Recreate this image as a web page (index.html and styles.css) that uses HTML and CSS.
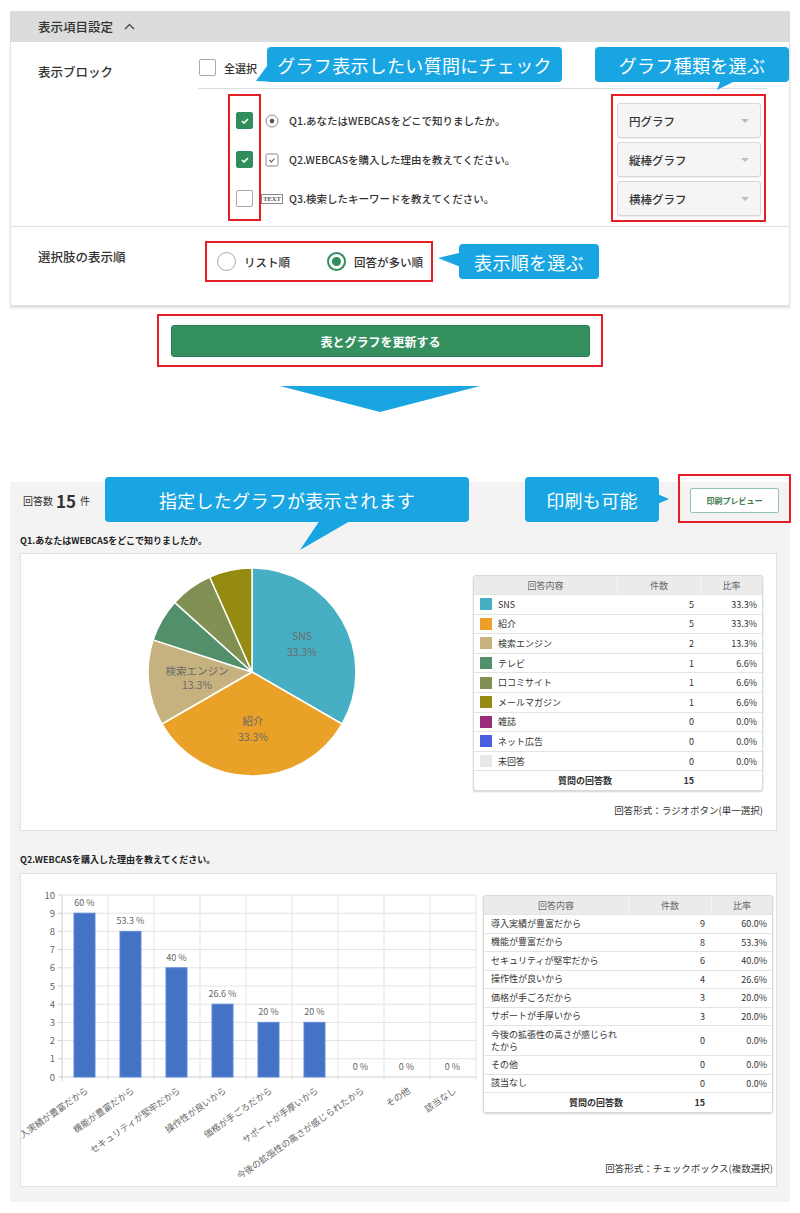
FILE: index.html
```html
<!DOCTYPE html>
<html lang="ja">
<head>
<meta charset="utf-8">
<title>表示項目設定</title>
<link rel="stylesheet" href="styles.css">
</head>
<body>
<div class="page">
  <section class="settings">
    <div class="settings-head">表示項目設定<svg class="chev" width="11" height="7" viewBox="0 0 11 7"><polyline points="1,6 5.5,1.5 10,6" fill="none" stroke="#555" stroke-width="1.5"/></svg></div>
    <div class="settings-body">
      <div class="block-row">
        <div class="row-label lbl-block">表示ブロック</div>
        <div class="row-content">
          <div class="all-row"><span class="cb"></span><span class="all-text">全選択</span></div>
          <div class="q-list">
            <div class="q-row">
              <span class="cb cb-on"><svg width="8" height="6" viewBox="0 0 8 6"><polyline points="1,3 3,5 7,1" fill="none" stroke="#fff" stroke-width="1.6"/></svg></span>
              <span class="qicon"><svg width="14" height="14" viewBox="0 0 14 14"><circle cx="7" cy="7" r="6" fill="none" stroke="#888" stroke-width="1"/><circle cx="7" cy="7" r="2.3" fill="#555"/></svg></span>
              <span class="qtext">Q1.あなたはWEBCASをどこで知りましたか。</span>
              <div class="sel"><span>円グラフ</span><i class="caret"></i></div>
            </div>
            <div class="q-row">
              <span class="cb cb-on"><svg width="8" height="6" viewBox="0 0 8 6"><polyline points="1,3 3,5 7,1" fill="none" stroke="#fff" stroke-width="1.6"/></svg></span>
              <span class="qicon"><svg width="14" height="14" viewBox="0 0 14 14"><rect x="1" y="1" width="12" height="12" rx="1.5" fill="none" stroke="#888" stroke-width="1"/><polyline points="4.5,7 6.5,9 9.5,5.5" fill="none" stroke="#555" stroke-width="1.1"/></svg></span>
              <span class="qtext">Q2.WEBCASを購入した理由を教えてください。</span>
              <div class="sel"><span>縦棒グラフ</span><i class="caret"></i></div>
            </div>
            <div class="q-row">
              <span class="cb"></span>
              <span class="qicon"><span class="text-ico">TEXT</span></span>
              <span class="qtext">Q3.検索したキーワードを教えてください。</span>
              <div class="sel"><span>横棒グラフ</span><i class="caret"></i></div>
            </div>
          </div>
        </div>
      </div>
      <div class="order-row">
        <div class="row-label lbl-order">選択肢の表示順</div>
        <div class="row-content order-content">
          <div class="radio-group">
            <label class="radio"><span class="rc"></span><span>リスト順</span></label>
            <label class="radio"><span class="rc on"></span><span>回答が多い順</span></label>
          </div>
          <div class="callout c-order">表示順を選ぶ</div>
        </div>
      </div>
    </div>
    <div class="callout c-check">グラフ表示したい質問にチェック</div>
    <div class="callout c-type">グラフ種類を選ぶ</div>
    <div class="mark m-checks"></div>
    <div class="mark m-selects"></div>
  </section>

  <div class="update-area">
    <div class="update-mark"><button class="update-btn">表とグラフを更新する</button></div>
  </div>
  <div class="down-arrow"></div>

  <section class="results">
    <div class="result-head">
      <span class="count-label">回答数</span><span class="count-num">15</span><span class="count-label">件</span>
      <div class="print-btn">印刷プレビュー</div>
    </div>
    <div class="callout c-graph">指定したグラフが表示されます</div>
    <div class="callout c-print">印刷も可能</div>
    <div class="mark m-print"></div>

    <div class="q-title q-title1">Q1.あなたはWEBCASをどこで知りましたか。</div>
    <div class="card card1">
      <svg class="pie" width="452" height="276" viewBox="0 0 452 276">
        <g stroke="#fff" stroke-width="1.5">
          <path d="M231,118 L231,14 A104,104 0 0 1 321.07,170 Z" fill="#47afc4"/>
          <path d="M231,118 L321.07,170 A104,104 0 0 1 140.93,170 Z" fill="#e9a127"/>
          <path d="M231,118 L140.93,170 A104,104 0 0 1 132.09,85.86 Z" fill="#c6b27f"/>
          <path d="M231,118 L132.09,85.86 A104,104 0 0 1 153.71,48.41 Z" fill="#52906c"/>
          <path d="M231,118 L153.71,48.41 A104,104 0 0 1 188.70,22.99 Z" fill="#819153"/>
          <path d="M231,118 L188.70,22.99 A104,104 0 0 1 231,14 Z" fill="#958b12"/>
        </g>
        <g class="pie-lbl" text-anchor="middle">
          <text x="281" y="86">SNS</text>
          <text x="281" y="102">33.3%</text>
          <text x="232" y="171">紹介</text>
          <text x="232" y="187">33.3%</text>
          <text x="176" y="121">検索エンジン</text>
          <text x="176" y="135">13.3%</text>
        </g>
      </svg>
      <div class="side side1">
        <div class="tbl t1">
          <div class="tr th"><div>回答内容</div><div>件数</div><div>比率</div></div>
          <div class="tr"><div class="c1"><i class="sw" style="background:#47afc4"></i>SNS</div><div class="c2">5</div><div class="c3">33.3%</div></div>
          <div class="tr"><div class="c1"><i class="sw" style="background:#e9a127"></i>紹介</div><div class="c2">5</div><div class="c3">33.3%</div></div>
          <div class="tr"><div class="c1"><i class="sw" style="background:#c6b27f"></i>検索エンジン</div><div class="c2">2</div><div class="c3">13.3%</div></div>
          <div class="tr"><div class="c1"><i class="sw" style="background:#52906c"></i>テレビ</div><div class="c2">1</div><div class="c3">6.6%</div></div>
          <div class="tr"><div class="c1"><i class="sw" style="background:#819153"></i>口コミサイト</div><div class="c2">1</div><div class="c3">6.6%</div></div>
          <div class="tr"><div class="c1"><i class="sw" style="background:#958b12"></i>メールマガジン</div><div class="c2">1</div><div class="c3">6.6%</div></div>
          <div class="tr"><div class="c1"><i class="sw" style="background:#9a2c79"></i>雑誌</div><div class="c2">0</div><div class="c3">0.0%</div></div>
          <div class="tr"><div class="c1"><i class="sw" style="background:#4a5de2"></i>ネット広告</div><div class="c2">0</div><div class="c3">0.0%</div></div>
          <div class="tr"><div class="c1"><i class="sw" style="background:#e8e8e8"></i>未回答</div><div class="c2">0</div><div class="c3">0.0%</div></div>
          <div class="tr total"><div class="c1">質問の回答数</div><div class="c2">15</div><div class="c3"></div></div>
        </div>
        <div class="form-note note1">回答形式：ラジオボタン(単一選択)</div>
      </div>
    </div>

    <div class="q-title q-title2">Q2.WEBCASを購入した理由を教えてください。</div>
    <div class="card card2">
      <svg class="bars" width="462" height="312" viewBox="0 0 462 312">
        <g stroke="#e3e3e3" stroke-width="1">
          <line x1="41" y1="184.8" x2="455" y2="184.8"/>
          <line x1="41" y1="166.6" x2="455" y2="166.6"/>
          <line x1="41" y1="148.4" x2="455" y2="148.4"/>
          <line x1="41" y1="130.2" x2="455" y2="130.2"/>
          <line x1="41" y1="112" x2="455" y2="112"/>
          <line x1="41" y1="93.8" x2="455" y2="93.8"/>
          <line x1="41" y1="75.6" x2="455" y2="75.6"/>
          <line x1="41" y1="57.4" x2="455" y2="57.4"/>
          <line x1="41" y1="39.2" x2="455" y2="39.2"/>
          <line x1="41" y1="21" x2="455" y2="21"/>
          <line x1="87" y1="21" x2="87" y2="207"/>
          <line x1="133" y1="21" x2="133" y2="207"/>
          <line x1="179" y1="21" x2="179" y2="207"/>
          <line x1="225" y1="21" x2="225" y2="207"/>
          <line x1="271" y1="21" x2="271" y2="207"/>
          <line x1="317" y1="21" x2="317" y2="207"/>
          <line x1="363" y1="21" x2="363" y2="207"/>
          <line x1="409" y1="21" x2="409" y2="207"/>
          <line x1="455" y1="21" x2="455" y2="207"/>
        </g>
        <g stroke="#cfcfcf" stroke-width="1">
          <line x1="41" y1="21" x2="41" y2="207"/>
          <line x1="37" y1="203" x2="455" y2="203"/>
          <line x1="37" y1="184.8" x2="41" y2="184.8"/>
          <line x1="37" y1="166.6" x2="41" y2="166.6"/>
          <line x1="37" y1="148.4" x2="41" y2="148.4"/>
          <line x1="37" y1="130.2" x2="41" y2="130.2"/>
          <line x1="37" y1="112" x2="41" y2="112"/>
          <line x1="37" y1="93.8" x2="41" y2="93.8"/>
          <line x1="37" y1="75.6" x2="41" y2="75.6"/>
          <line x1="37" y1="57.4" x2="41" y2="57.4"/>
          <line x1="37" y1="39.2" x2="41" y2="39.2"/>
          <line x1="37" y1="21" x2="41" y2="21"/>
        </g>
        <g class="axis-lbl" text-anchor="end">
          <text x="34" y="206.5">0</text>
          <text x="34" y="188.3">1</text>
          <text x="34" y="170.1">2</text>
          <text x="34" y="151.9">3</text>
          <text x="34" y="133.7">4</text>
          <text x="34" y="115.5">5</text>
          <text x="34" y="97.3">6</text>
          <text x="34" y="79.1">7</text>
          <text x="34" y="60.9">8</text>
          <text x="34" y="42.7">9</text>
          <text x="34" y="24.5">10</text>
        </g>
        <g fill="#4472c4" stroke="#5b8ad8" stroke-width="1">
          <rect x="53" y="39.2" width="21" height="163.8"/>
          <rect x="99" y="57.4" width="21" height="145.6"/>
          <rect x="145" y="93.8" width="21" height="109.2"/>
          <rect x="191" y="130.2" width="21" height="72.8"/>
          <rect x="237" y="148.4" width="21" height="54.6"/>
          <rect x="283" y="148.4" width="21" height="54.6"/>
        </g>
        <g class="val-lbl" text-anchor="middle">
          <text x="63.5" y="32">60 %</text>
          <text x="109.5" y="50.4">53.3 %</text>
          <text x="155.5" y="86.8">40 %</text>
          <text x="201.5" y="123.2">26.6 %</text>
          <text x="247.5" y="141.4">20 %</text>
          <text x="293.5" y="141.4">20 %</text>
          <text x="339.5" y="196">0 %</text>
          <text x="385.5" y="196">0 %</text>
          <text x="431.5" y="196">0 %</text>
        </g>
        <g class="x-lbl" text-anchor="end">
          <text x="68" y="218" transform="rotate(-35 68 218)">導入実績が豊富だから</text>
          <text x="114" y="218" transform="rotate(-35 114 218)">機能が豊富だから</text>
          <text x="160" y="218" transform="rotate(-35 160 218)">セキュリティが堅牢だから</text>
          <text x="206" y="218" transform="rotate(-35 206 218)">操作性が良いから</text>
          <text x="252" y="218" transform="rotate(-35 252 218)">価格が手ごろだから</text>
          <text x="298" y="218" transform="rotate(-35 298 218)">サポートが手厚いから</text>
          <text x="344" y="218" transform="rotate(-35 344 218)">今後の拡張性の高さが感じられたから</text>
          <text x="390" y="218" transform="rotate(-35 390 218)">その他</text>
          <text x="436" y="218" transform="rotate(-35 436 218)">該当なし</text>
        </g>
      </svg>
      <div class="side side2">
        <div class="tbl t2">
          <div class="tr th"><div>回答内容</div><div>件数</div><div>比率</div></div>
          <div class="tr"><div class="c1">導入実績が豊富だから</div><div class="c2">9</div><div class="c3">60.0%</div></div>
          <div class="tr"><div class="c1">機能が豊富だから</div><div class="c2">8</div><div class="c3">53.3%</div></div>
          <div class="tr"><div class="c1">セキュリティが堅牢だから</div><div class="c2">6</div><div class="c3">40.0%</div></div>
          <div class="tr"><div class="c1">操作性が良いから</div><div class="c2">4</div><div class="c3">26.6%</div></div>
          <div class="tr"><div class="c1">価格が手ごろだから</div><div class="c2">3</div><div class="c3">20.0%</div></div>
          <div class="tr"><div class="c1">サポートが手厚いから</div><div class="c2">3</div><div class="c3">20.0%</div></div>
          <div class="tr tall"><div class="c1">今後の拡張性の高さが感じられたから</div><div class="c2">0</div><div class="c3">0.0%</div></div>
          <div class="tr"><div class="c1">その他</div><div class="c2">0</div><div class="c3">0.0%</div></div>
          <div class="tr"><div class="c1">該当なし</div><div class="c2">0</div><div class="c3">0.0%</div></div>
          <div class="tr total"><div class="c1">質問の回答数</div><div class="c2">15</div><div class="c3"></div></div>
        </div>
        <div class="form-note note2">回答形式：チェックボックス(複数選択)</div>
      </div>
    </div>
  </section>
</div>
</body>
</html>
```

FILE: styles.css
```css
* { box-sizing: border-box; margin: 0; padding: 0; }
body {
  font-family: "Noto Sans CJK JP", "Noto Sans", sans-serif;
  color: #333;
  background: #fff;
  width: 800px;
}
.page { padding: 11px 10px 0; }

/* ---------- settings panel ---------- */
.settings { position: relative; width: 780px; }
.settings-head {
  height: 31px;
  background: #dcdcdc;
  display: flex;
  align-items: center;
  padding-left: 28px;
  font-size: 12.5px;
  font-weight: 500;
}
.chev { margin-left: 11px; }
.settings-body {
  background: #fff;
  border: 1px solid #e2e2e2;
  border-top: none;
  box-shadow: 0 2px 2px rgba(0, 0, 0, 0.13);
}
.block-row {
  display: flex;
  padding: 17px 22px 8px 27px;
  border-bottom: 1px solid #e0e0e0;
}
.row-label { width: 160px; flex: none; font-size: 12.5px; line-height: 20px; font-weight: 500; }
.lbl-block { padding-top: 3px; }
.lbl-order { padding-top: 6px; }
.row-content { flex: 1; }
.all-row {
  height: 30px;
  display: flex;
  align-items: flex-start;
  gap: 8px;
  padding-left: 1px;
  border-bottom: 1px solid #dedede;
}
.all-text { font-size: 11px; line-height: 18px; font-weight: 500; }
.cb {
  width: 17px; height: 17px; flex: none;
  border: 1.5px solid #a8a8a8;
  border-radius: 2px;
  background: #fff;
  display: flex; align-items: center; justify-content: center;
}
.cb-on { background: #2f8f5c; border-color: #2f8f5c; }
.q-list { padding-top: 12px; }
.q-row { height: 39px; display: flex; align-items: center; padding-left: 38px; }
.qicon { width: 20px; margin: 0 7px 0 9px; display: flex; justify-content: center; align-items: center; }
.text-ico {
  font-family: "Liberation Serif", serif;
  font-size: 6.5px;
  font-weight: bold;
  color: #555;
  border: 1px solid #888;
  line-height: 8px;
  padding: 0 1px;
}
.qtext { font-size: 10.5px; font-weight: 500; }
.sel {
  margin-left: auto;
  margin-right: 6px;
  width: 144px;
  height: 35px;
  background: #f5f5f5;
  border: 1px solid #d6d6d6;
  border-radius: 3px;
  box-shadow: 0 1px 1px rgba(0, 0, 0, 0.07);
  display: flex;
  align-items: center;
  padding: 0 11px;
  font-size: 11.5px;
  font-weight: 500;
}
.caret {
  margin-left: auto;
  width: 0; height: 0;
  border-left: 4px solid transparent;
  border-right: 4px solid transparent;
  border-top: 4px solid #bdbdbd;
}
.order-row { display: flex; padding: 14px 22px 23px 27px; }
.order-content { display: flex; align-items: center; }
.radio-group {
  margin-left: 7px;
  width: 228px;
  height: 41px;
  border: 2px solid #e61f27;
  display: flex;
  align-items: center;
  padding-left: 10px;
}
.radio { display: flex; align-items: center; gap: 8px; font-size: 11.5px; font-weight: 500; }
.radio + .radio { margin-left: 37px; }
.rc {
  width: 19px; height: 19px;
  border: 1.5px solid #aaa;
  border-radius: 50%;
  background: #fff;
  display: flex; align-items: center; justify-content: center;
}
.rc.on { border: 2px solid #2f8f5c; }
.rc.on::after { content: ""; width: 9px; height: 9px; border-radius: 50%; background: #2f8f5c; }

/* ---------- callouts & marks ---------- */
.callout {
  background: #18a5e2;
  color: #fff;
  font-size: 18px;
  letter-spacing: 0.3px;
  border-radius: 4px;
  display: flex;
  align-items: center;
  justify-content: center;
  position: relative;
}
.callout::after { content: ""; position: absolute; background: #18a5e2; }
.c-order { margin-left: 26px; width: 140px; height: 35px; }
.c-order::after { left: -21px; top: 8px; width: 25px; height: 16px; clip-path: polygon(0 6px, 25px 0, 25px 16px); }
.c-check { position: absolute; left: 257px; top: 36px; width: 295px; height: 35px; }
.c-check::after { left: -11px; top: 19px; width: 20px; height: 16px; clip-path: polygon(11px 0, 0 15px, 20px 16px, 20px 0); }
.c-type { position: absolute; left: 585px; top: 36px; width: 194px; height: 35px; }
.c-type::after { left: 122px; top: 30px; width: 26px; height: 13px; clip-path: polygon(5px 0, 26px 0, 0 13px); }
.c-graph { position: absolute; left: 95px; top: -5px; width: 364px; height: 45px; }
.c-graph::after { left: 195px; top: 40px; width: 57px; height: 33px; clip-path: polygon(22px 0, 57px 0, 0 33px); }
.c-print { position: absolute; left: 515px; top: -5px; width: 134px; height: 45px; }
.c-print::after { left: 130px; top: 16px; width: 14px; height: 12px; clip-path: polygon(0 0, 14px 6px, 0 12px); }
.mark { position: absolute; border: 2px solid #e61f27; }
.m-checks { left: 218px; top: 83px; width: 33px; height: 127px; }
.m-selects { left: 601px; top: 83px; width: 155px; height: 128px; }
.m-print { left: 668px; top: -8px; width: 113px; height: 49px; }

/* ---------- update button ---------- */
.update-area { margin-top: 8px; }
.update-mark {
  margin-left: 147px;
  width: 446px;
  height: 53px;
  border: 2px solid #e61f27;
  padding: 9px 11px 8px 12px;
}
.update-btn {
  width: 419px;
  height: 32px;
  background: #34915f;
  border: 1px solid #2b7d51;
  border-radius: 3px;
  color: #fff;
  font-family: inherit;
  font-size: 12px;
  font-weight: bold;
}
.down-arrow {
  margin: 19px 0 0 270px;
  width: 0; height: 0;
  border-left: 100px solid transparent;
  border-right: 100px solid transparent;
  border-top: 26px solid #18a5e2;
}

/* ---------- results ---------- */
.results {
  position: relative;
  margin-top: 70px;
  width: 780px;
  background: #f3f3f3;
  padding-bottom: 15px;
}
.result-head { height: 36px; display: flex; align-items: center; padding: 0 11px 0 13px; }
.count-label { font-size: 10px; }
.count-num { font-size: 17px; font-weight: bold; margin: 0 4px 0 3px; }
.print-btn {
  margin-left: auto;
  width: 89px; height: 25px;
  background: #fff;
  border: 1.5px solid #93c6a9;
  border-radius: 2px;
  color: #3c7b4c;
  font-size: 8px;
  font-weight: bold;
  display: flex; align-items: center; justify-content: center;
}
.q-title { padding-left: 10px; font-size: 9px; font-weight: bold; line-height: 14px; color: #222; }
.q-title1 { margin-top: 16px; }
.q-title2 { margin-top: 22px; }
.card {
  margin: 5px 0 0 10px;
  width: 757px;
  background: #fff;
  border: 1px solid #e2e2e2;
  display: flex;
}
.card2 { margin-top: 6px; height: 314px; }
.card1 { height: 278px; }
.pie, .bars { flex: none; display: block; }
.pie-lbl text { font-family: "Noto Sans CJK JP", sans-serif; font-size: 10.5px; fill: #6a6a6a; }
.axis-lbl text { font-family: "Noto Sans CJK JP", sans-serif; font-size: 9.5px; fill: #666; }
.val-lbl text { font-family: "Noto Sans CJK JP", sans-serif; font-size: 9px; fill: #666; }
.x-lbl text { font-family: "Noto Sans CJK JP", sans-serif; font-size: 9px; fill: #666; }
.side { width: 290px; flex: none; padding-top: 21px; }

.tbl {
  border: 1px solid #d9d9d9;
  border-radius: 3px;
  box-shadow: 0 1px 2px rgba(0, 0, 0, 0.18);
  overflow: hidden;
  background: #fff;
  font-size: 9px;
}
.tr {
  display: grid;
  align-items: stretch;
  border-top: 1px solid #e4e4e4;
}
.t1 .tr { grid-template-columns: 143px 83px 1fr; height: 19.6px; }
.t2 .tr { grid-template-columns: 144px 83px 1fr; height: 18.5px; }
.t2 .tr.tall { height: 30px; }
.t2 .tr.total, .t1 .tr.total { height: 20px; }
.tr.th { border-top: none; background: #ebebeb; height: 18px; }
.tr.th > div {
  display: flex; align-items: center; justify-content: center;
  color: #666;
}
.tr.th > div + div { border-left: 1px solid #f7f7f7; }
.c1, .c2, .c3 { display: flex; align-items: center; }
.c2, .c3 { justify-content: flex-end; }
.c2 { padding-right: 6px; }
.c3 { padding-right: 5px; }
.t1 .c1 { padding-left: 6px; gap: 6px; }
.t2 .c1 { padding-left: 7px; padding-right: 8px; line-height: 12px; }
.sw { width: 12px; height: 12px; flex: none; display: block; }
.tr.total .c1 { justify-content: flex-end; padding-right: 5px; font-weight: bold; }
.tr.total .c2 { font-weight: bold; }
.form-note { text-align: right; font-size: 9.5px; line-height: 14px; }
.note1 { margin-top: 12px; }
.note2 { margin-top: 48px; padding-right: 0; }
```
